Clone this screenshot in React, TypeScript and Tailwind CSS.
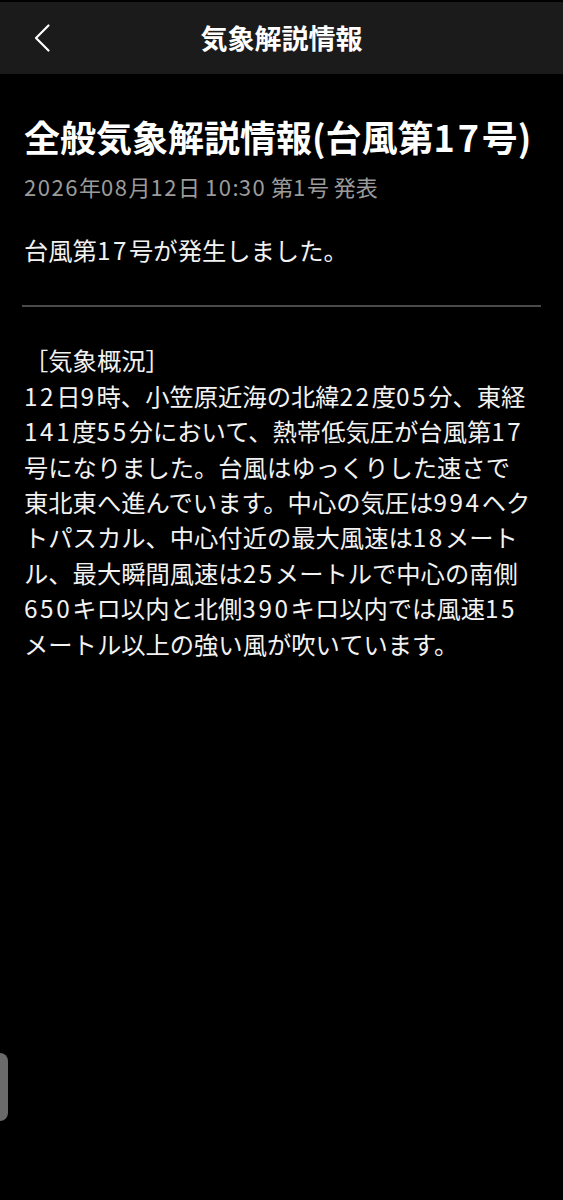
import type { ReactNode } from "react"

const FONT = { fontFamily: '"Noto Sans CJK JP", "Noto Sans", sans-serif' }

const BODY_LINES = [
  "［気象概況］",
  "12日9時、小笠原近海の北緯22度05分、東経",
  "141度55分において、熱帯低気圧が台風第17",
  "号になりました。台風はゆっくりした速さで",
  "東北東へ進んでいます。中心の気圧は994ヘク",
  "トパスカル、中心付近の最大風速は18メート",
  "ル、最大瞬間風速は25メートルで中心の南側",
  "650キロ以内と北側390キロ以内では風速15",
  "メートル以上の強い風が吹いています。",
]

// digits in the reference font run wider than the CJK font's, so space them out
function Spaced({ text, track }: { text: string; track: string }) {
  const parts: ReactNode[] = text.split(/(\d+)/).map((p, i) =>
    /^\d+$/.test(p) ? (
      <span key={i} className={track}>
        {p}
      </span>
    ) : (
      p
    )
  )
  return <>{parts}</>
}

export default function App() {
  return (
    <div className="relative w-[563px] h-[1200px] bg-black text-white overflow-hidden" style={FONT}>
      {/* App bar */}
      <div className="mt-[2px] h-[72px] bg-[#1b1b1b] flex items-center justify-center relative">
        <button className="absolute left-[33px] top-[21px] w-[20px] h-[30px] text-white">
          <svg width="20" height="30" viewBox="0 0 20 30" fill="none" stroke="currentColor" strokeWidth="2.2" strokeLinecap="round" strokeLinejoin="round">
            <polyline points="15.5,2.5 3,15 15.5,27.5" />
          </svg>
        </button>
        <h1 className="text-[27px] leading-[36px] font-bold">気象解説情報</h1>
      </div>

      <div className="px-[24px]">
        <h2 className="mt-[38px] text-[36px] leading-[48px] font-bold whitespace-nowrap">
          <Spaced text="全般気象解説情報(台風第17号)" track="tracking-[0.08em]" />
        </h2>
        <p className="mt-[12px] text-[22px] leading-[28px] text-[#9b9b9b] whitespace-nowrap">
          <Spaced text="2026年08月12日 10:30 第1号 発表" track="tracking-[0.07em]" />
        </p>

        <p className="mt-[32px] text-[24.3px] leading-[35.4px] text-[#f2f2f2] whitespace-nowrap">
          <Spaced text="台風第17号が発生しました。" track="tracking-[0.107em]" />
        </p>

        <div className="mt-[38px] -mx-[2px] h-[2px] bg-[#4a4a4a]" />

        <div className="mt-[35px] text-[24.3px] leading-[35.4px] text-[#f2f2f2]">
          {BODY_LINES.map((line) => (
            <div key={line} className="whitespace-nowrap">
              <Spaced text={line} track="tracking-[0.107em]" />
            </div>
          ))}
        </div>
      </div>

      {/* Edge handle */}
      <div className="absolute left-0 top-[1053px] w-[8px] h-[68px] bg-[#6a6a6a] rounded-r-[8px]" />
    </div>
  )
}
